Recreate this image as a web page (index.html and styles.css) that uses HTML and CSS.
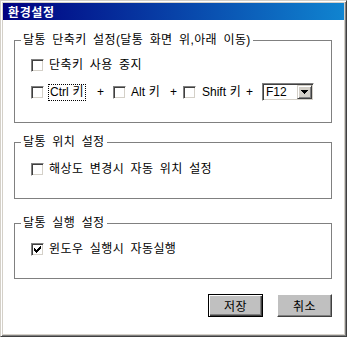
FILE: index.html
```html
<!DOCTYPE html>
<html lang="ko">
<head>
<meta charset="utf-8">
<title>환경설정</title>
<link rel="stylesheet" href="styles.css">
</head>
<body>
<div class="window">
  <div class="titlebar"><span class="title">환경설정</span></div>
  <div class="client">
    <fieldset class="group g1">
      <legend>달통 단축키 설정(달통 화면 위,아래 이동)</legend>
      <div class="row r1"><span class="chk"></span><span class="lbl">단축키 사용 중지</span></div>
      <div class="row r2">
        <span class="item ia"><span class="chk"></span><span class="lbl key focus">Ctrl 키</span></span>
        <span class="plus pa">+</span>
        <span class="item ib"><span class="chk"></span><span class="lbl key">Alt 키</span></span>
        <span class="plus pb">+</span>
        <span class="item ic"><span class="chk"></span><span class="lbl key">Shift 키</span></span>
        <span class="plus pc">+</span>
        <span class="combo"><span class="combo-text">F12</span><span class="combo-btn"><svg width="7" height="4" viewBox="0 0 7 4" shape-rendering="crispEdges"><path d="M0 0H7V1H6V2H5V3H4V4H3V3H2V2H1V1H0Z" fill="#000"/></svg></span></span>
      </div>
    </fieldset>
    <fieldset class="group g2">
      <legend>달통 위치 설정</legend>
      <div class="row r3"><span class="chk"></span><span class="lbl">해상도 변경시 자동 위치 설정</span></div>
    </fieldset>
    <fieldset class="group g3">
      <legend>달통 실행 설정</legend>
      <div class="row r4"><span class="chk checked"><svg width="7" height="7" viewBox="0 0 7 7" shape-rendering="crispEdges"><rect x="0" y="2" width="1" height="3"/><rect x="1" y="3" width="1" height="3"/><rect x="2" y="4" width="1" height="3"/><rect x="3" y="3" width="1" height="3"/><rect x="4" y="2" width="1" height="3"/><rect x="5" y="1" width="1" height="3"/><rect x="6" y="0" width="1" height="3"/></svg></span><span class="lbl">윈도우 실행시 자동실행</span></div>
    </fieldset>
    <div class="buttons">
      <button class="btn default">저장</button>
      <button class="btn">취소</button>
    </div>
  </div>
</div>
</body>
</html>
```
FILE: styles.css
```css
html, body {
  margin: 0;
  padding: 0;
}
body {
  width: 347px;
  height: 337px;
  overflow: hidden;
  font-family: "Liberation Sans", "Noto Sans CJK KR", sans-serif;
  font-size: 12px;
  color: #000;
  word-spacing: 2.7px;
  letter-spacing: 0.4px;
}
.window {
  box-sizing: border-box;
  width: 347px;
  height: 337px;
  border: 1px solid;
  border-color: #d4d0c8 #404040 #404040 #d4d0c8;
  box-shadow: inset 1px 1px #fff, inset -1px -1px #808080;
  padding: 2px;
  background: #d4d0c8;
  display: flex;
  flex-direction: column;
}
.titlebar {
  height: 17px;
  flex: none;
  background: linear-gradient(to right, #000080, #1084d0);
  display: flex;
  align-items: center;
  padding-left: 5px;
}
.title {
  color: #fff;
  font-weight: bold;
  font-size: 12px;
  line-height: 14px;
  letter-spacing: 0.6px;
  font-family: "Noto Sans CJK KR", sans-serif;
}
.client {
  flex: 1;
  background: #fff;
  padding: 0 12px 0 11px;
  display: flex;
  flex-direction: column;
}
.group {
  margin: 0;
  border: 1px solid #808080;
  padding: 0 0 0 6px;
  min-width: 0;
  box-sizing: border-box;
}
.group legend {
  padding: 0 2px;
  line-height: 14px;
  font-size: 12px;
}
.g1 { margin-top: 13px; height: 90px; }
.g2 { margin-top: 12px; height: 64px; }
.g3 { margin-top: 17px; height: 63px; }
.row {
  display: flex;
  align-items: center;
  height: 18px;
  padding-left: 10px;
}
.r1 { margin-top: 9px; }
.r2 { margin-top: 9px; }
.r3 { margin-top: 11px; }
.r4 { margin-top: 10px; }
.item {
  display: flex;
  align-items: center;
  flex: none;
}
.ia { width: 66px; }
.ib { width: 57px; }
.ic { width: 63px; }
.plus { flex: none; }
.pa { width: 16px; }
.pb { width: 13px; }
.pc { width: 16px; }
.chk {
  box-sizing: border-box;
  width: 13px;
  height: 13px;
  flex: none;
  background: #fff;
  border: 1px solid;
  border-color: #808080 #fff #fff #808080;
  box-shadow: inset 1px 1px #404040, inset -1px -1px #d4d0c8;
  display: flex;
  align-items: center;
  justify-content: center;
}
.chk svg { display: block; fill: #000; }
.lbl {
  margin-left: 5px;
  line-height: 15px;
  white-space: nowrap;
}
.lbl.key {
  word-spacing: 0.5px;
  letter-spacing: 0;
}
.ic .lbl { margin-left: 6px; }
.lbl.focus {
  margin-left: 4px;
  border: 1px dotted #000;
  padding: 0 1px;
}
.combo {
  box-sizing: border-box;
  width: 52px;
  height: 18px;
  flex: none;
  background: #fff;
  border: 1px solid;
  border-color: #808080 #fff #fff #808080;
  box-shadow: inset 1px 1px #404040, inset -1px -1px #d4d0c8;
  padding: 1px;
  display: flex;
  align-items: stretch;
}
.combo-text {
  flex: 1;
  padding-left: 2px;
  line-height: 14px;
  letter-spacing: 0;
}
.combo-btn {
  box-sizing: border-box;
  width: 15px;
  flex: none;
  background: #d4d0c8;
  border: 1px solid;
  border-color: #d4d0c8 #404040 #404040 #d4d0c8;
  box-shadow: inset 1px 1px #fff, inset -1px -1px #808080;
  display: flex;
  align-items: center;
  justify-content: center;
}
.combo-btn svg { display: block; }
.buttons {
  margin-top: 15px;
  display: flex;
  justify-content: flex-end;
  gap: 14px;
}
.btn {
  box-sizing: border-box;
  width: 55px;
  height: 23px;
  margin: 0;
  padding: 0;
  font-family: "Liberation Sans", "Noto Sans CJK KR", sans-serif;
  font-size: 12px;
  color: #000;
  word-spacing: 2.7px;
  letter-spacing: 0.4px;
  background: #c0c0c0;
  border: 1px solid;
  border-color: #fff #404040 #404040 #fff;
  box-shadow: inset -1px -1px #808080;
}
.btn.default {
  border-color: #000;
  box-shadow: inset 1px 1px #fff, inset -1px -1px #404040, inset -2px -2px #808080;
}
```
